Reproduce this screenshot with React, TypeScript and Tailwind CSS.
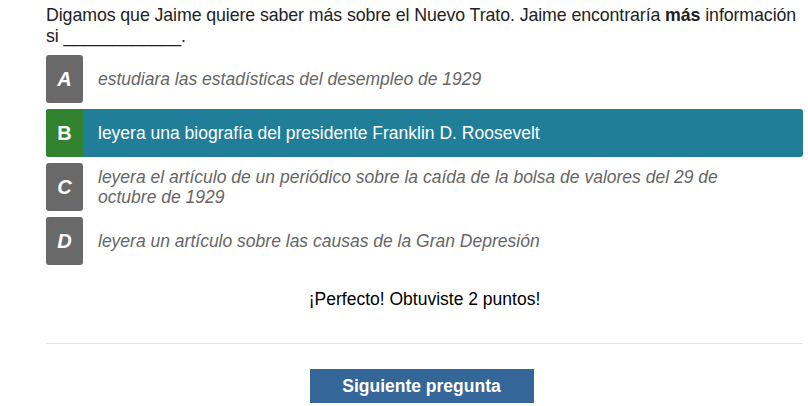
const options = [
    { letter: 'A', text: 'estudiara las estadísticas del desempleo de 1929' },
    { letter: 'B', text: 'leyera una biografía del presidente Franklin D. Roosevelt', correct: true },
    { letter: 'C', text: 'leyera el artículo de un periódico sobre la caída de la bolsa de valores del 29 de octubre de 1929' },
    { letter: 'D', text: 'leyera un artículo sobre las causas de la Gran Depresión' },
];

export default function App() {
    return (
        <div className="min-h-screen bg-white font-['Liberation_Sans',Arial,sans-serif]">
            <div className="ml-[46px] mr-[5px] pt-[5px]">
                <p className="text-[17.8px] leading-[21px] tracking-[-0.1px] text-[#222]">
                    Digamos que Jaime quiere saber más sobre el Nuevo Trato. Jaime encontraría <b>más</b> información si ____________.
                </p>

                <div className="mt-[8px] flex flex-col gap-[6px]">
                    {options.map(opt =>
                        opt.correct ? (
                            <div key={opt.letter} className="flex h-[48px] items-center rounded-[3px] bg-[#217e99]">
                                <div className="flex h-full w-[37px] items-center justify-center rounded-l-[3px] bg-[#31822f] text-[20px] font-bold text-white">
                                    {opt.letter}
                                </div>
                                <span className="ml-[15px] text-[17.5px] leading-5 text-white">{opt.text}</span>
                            </div>
                        ) : (
                            <div key={opt.letter} className="flex h-[48px] items-center">
                                <div className="flex h-full w-[37px] shrink-0 items-center justify-center rounded-[3px] bg-[#696969] text-[20px] font-bold italic text-white">
                                    {opt.letter}
                                </div>
                                <span className="ml-[15px] pr-[70px] text-[17.5px] italic leading-5 text-[#666]">{opt.text}</span>
                            </div>
                        )
                    )}
                </div>

                <p className="mt-[24px] text-center text-[17.5px] leading-5 text-black">¡Perfecto! Obtuviste 2 puntos!</p>

                <div className="mt-[34px] border-t border-[#e5e5e5]" />

                <div className="mt-[25px] flex justify-center pr-[6px]">
                    <button className="h-[34px] w-[224px] bg-[#346699] text-[17.5px] font-bold text-white">
                        Siguiente pregunta
                    </button>
                </div>
            </div>
        </div>
    );
}
